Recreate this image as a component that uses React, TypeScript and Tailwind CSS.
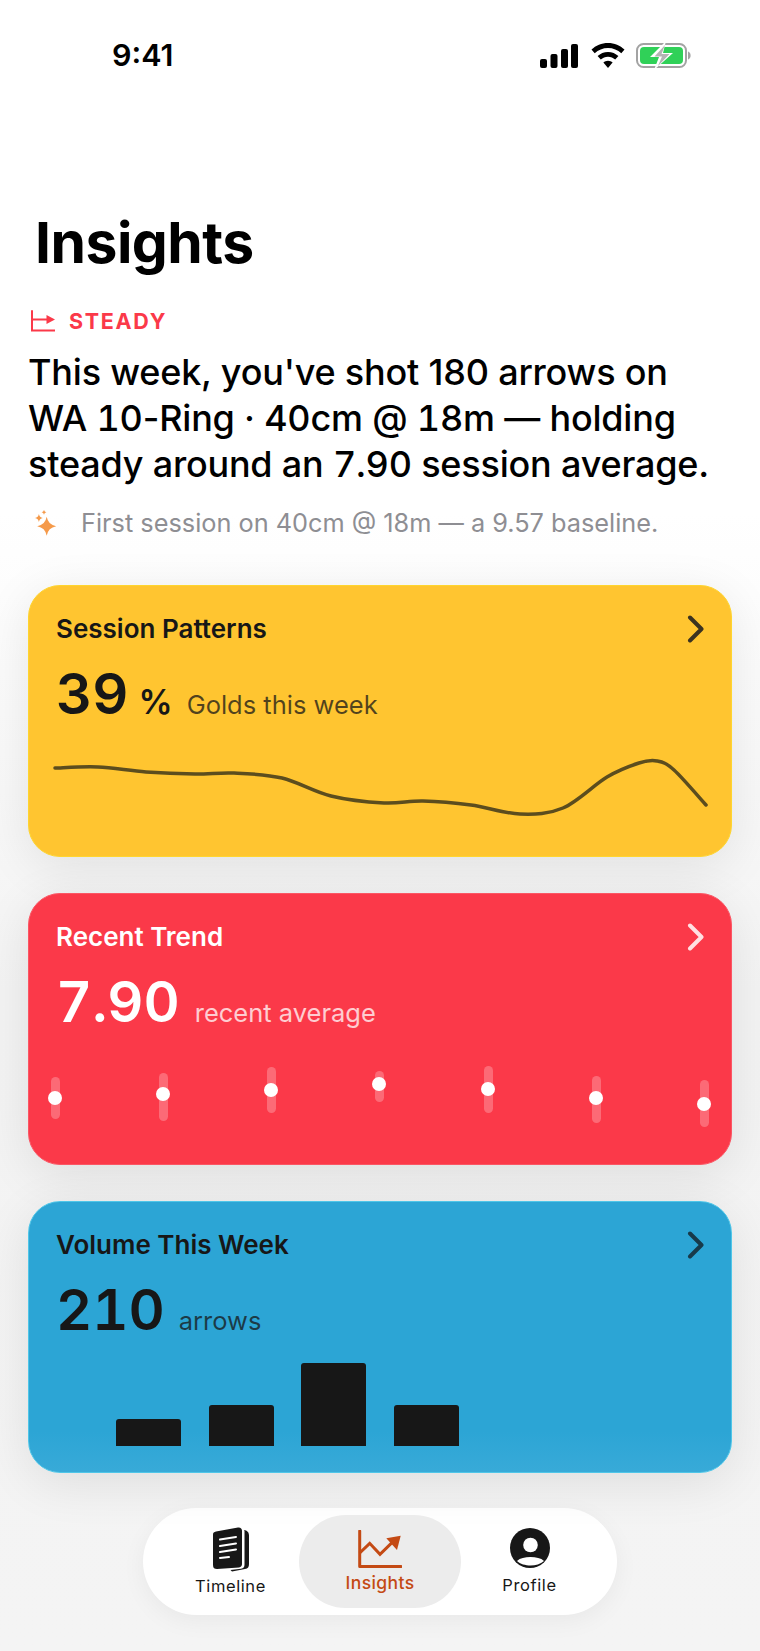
const font = { fontFamily: "Inter, 'Liberation Sans', sans-serif" };

const buildSpline = (points: number[][]) => {
  let d = `M${points[0][0]} ${points[0][1]}`;
  for (let i = 0; i < points.length - 1; i++) {
    const p0 = points[i - 1] || points[i];
    const p1 = points[i];
    const p2 = points[i + 1];
    const p3 = points[i + 2] || p2;
    const c1x = p1[0] + (p2[0] - p0[0]) / 6;
    const c1y = p1[1] + (p2[1] - p0[1]) / 6;
    const c2x = p2[0] - (p3[0] - p1[0]) / 6;
    const c2y = p2[1] - (p3[1] - p1[1]) / 6;
    d += ` C${c1x} ${c1y} ${c2x} ${c2y} ${p2[0]} ${p2[1]}`;
  }
  return d;
};

// sparkline points, measured off the card's left edge and chart top
const sparkline = [
  [26, 18], [69, 17], [117, 22], [166, 24], [205, 23], [253, 28], [302, 46],
  [355, 53], [394, 51], [442, 55], [491, 64], [534, 58], [578, 27], [610, 13],
  [628, 11], [645, 20], [677, 55],
];

const trend = [
  { top: 11, height: 42, dot: 32 },
  { top: 7, height: 48, dot: 28 },
  { top: 1, height: 46, dot: 24 },
  { top: 5, height: 31, dot: 18 },
  { top: 0, height: 47, dot: 23 },
  { top: 10, height: 47, dot: 32 },
  { top: 14, height: 47, dot: 38 },
];

const star = (cx: number, cy: number, r: number) =>
  `M${cx} ${cy - r} Q${cx + r * 0.15} ${cy - r * 0.15} ${cx + r} ${cy} Q${cx + r * 0.15} ${cy + r * 0.15} ${cx} ${cy + r} Q${cx - r * 0.15} ${cy + r * 0.15} ${cx - r} ${cy} Q${cx - r * 0.15} ${cy - r * 0.15} ${cx} ${cy - r} Z`;

const Chevron = ({ className }: { className: string }) => (
  <svg width="18" height="28" viewBox="0 0 18 28" fill="none" className={className}>
    <path d="M3 2.500 L14.500 14 L3 25.500" stroke="currentColor" strokeWidth="4" strokeLinecap="round" strokeLinejoin="round" />
  </svg>
);

const StatusBar = () => (
  <div className="flex h-[70px] items-end justify-between pl-[112px] pr-[69px]">
    <span className="mb-[-3px] text-[30.500px] leading-[36px] font-semibold text-black">9:41</span>
    <div className="mb-[2px] flex items-center gap-[13px]">
      <svg width="38" height="24" viewBox="0 0 38 24" fill="#000">
        <rect x="0" y="15" width="7" height="9" rx="2" />
        <rect x="10.500" y="10" width="7" height="14" rx="2" />
        <rect x="21" y="5" width="7" height="19" rx="2" />
        <rect x="31" y="0" width="7" height="24" rx="2" />
      </svg>
      <svg width="34" height="25" viewBox="0 0 34 25" fill="#000">
        <path d="M17 0C10.600 0 4.800 2.500.500 6.600l3.200 3.600C7.200 6.900 11.900 4.900 17 4.900s9.800 2 13.300 5.300l3.200-3.600C29.200 2.500 23.400 0 17 0z" />
        <path d="M17 9c-4 0-7.700 1.600-10.400 4.100l3.200 3.500c1.900-1.700 4.400-2.800 7.200-2.800s5.300 1.100 7.200 2.800l3.200-3.500C24.700 10.600 21 9 17 9z" />
        <path d="M17 17.800c-1.800 0-3.400.7-4.600 1.700L17 25l4.600-5.500c-1.200-1-2.800-1.700-4.600-1.700z" />
      </svg>
      <svg width="55" height="25" viewBox="0 0 55 25" fill="none" className="-ml-[2px]">
        <rect x="1" y="1" width="49" height="23" rx="6.500" stroke="#a3a3a3" strokeWidth="2" />
        <path d="M52 8.500c1.600.5 2.600 2 2.600 4s-1 3.500-2.600 4z" fill="#a3a3a3" />
        <rect x="4" y="4" width="43" height="17" rx="4" fill="#30d158" />
        <path d="M30 -2 L14 14 H23 L18 27 L37 10 H27 Z" fill="#fff" />
        <path d="M29 2 L18.500 13.500 H26 L22 23 L33.500 11 H25.500 Z" fill="#b4b4b4" />
      </svg>
    </div>
  </div>
);

const Summary = () => (
  <div className="pl-[28px] pr-[20px]">
    <div className="mt-[45px] flex items-center gap-[14px] pl-[3px]">
      <svg width="24" height="22" viewBox="0 0 24 22" fill="none">
        <path d="M1 1 V20.500 H24" stroke="#fb3949" strokeWidth="2" strokeLinecap="round" />
        <path d="M1 9.500 H17" stroke="#fb3949" strokeWidth="2" />
        <path d="M15.500 5 L24 9.500 L15.500 14 Z" fill="#fb3949" />
      </svg>
      <span className="text-[21.500px] leading-[24px] font-bold tracking-[1.7px] text-[#fb3949]">STEADY</span>
    </div>
    <p className="mt-[16px] text-[36px] leading-[46px] font-medium tracking-[-0.2px] text-black">
      This week, you've shot 180 arrows on
      <br />
      WA <span className="tabular-nums">10</span>-Ring · <span className="tabular-nums">40</span>cm @ <span className="tabular-nums">18</span>m — holding
      <br />
      steady around an <span className="tabular-nums">7.90</span> session average.
    </p>
    <div className="mt-[21px] flex items-center gap-[24px] pl-[7px]">
      <svg width="22" height="26" viewBox="0 0 22 26" fill="#f59a4a">
        <path d={star(11.700, 16.300, 9.500)} />
        <path d={star(3.900, 8, 3.900)} />
        <path d={star(9, 2.300, 2.400)} />
      </svg>
      <span className="text-[25.300px] leading-[30px] text-[#8e8e93]">First session on 40cm @ 18m — a 9.57 baseline.</span>
    </div>
  </div>
);

const cardShell = "flex h-[272px] flex-col rounded-[32px] border shadow-[0_10px_50px_rgba(0,0,0,0.09)]";

const CardHeader = ({ title, chevron, titleClass }: { title: string; chevron: string; titleClass: string }) => (
  <div className="flex items-center justify-between pt-[28px] pr-[26px] pl-[27px]">
    <span className={`text-[26px] leading-[30px] font-semibold ${titleClass}`}>{title}</span>
    <Chevron className={chevron} />
  </div>
);

const SessionPatterns = () => (
  <div className={`${cardShell} border-[#ffd52e] bg-[#ffc530]`}>
    <CardHeader title="Session Patterns" chevron="text-[#3b3320]" titleClass="text-[#171717]" />
    <div className="mt-[18px] flex items-baseline pl-[27px]">
      <span className="text-[56px] leading-[64px] font-semibold text-[#171717] tabular-nums">39</span>
      <span className="ml-[10px] text-[34px] leading-[40px] font-semibold text-[#171717]">%</span>
      <span className="ml-[14px] text-[25.500px] text-[#171717]/75">Golds this week</span>
    </div>
    <svg width="703" height="70" viewBox="0 0 703 70" fill="none" className="mt-[24px]">
      <path d={buildSpline(sparkline)} stroke="#5c4d1e" strokeWidth="3.500" strokeLinecap="round" />
    </svg>
  </div>
);

const RecentTrend = () => (
  <div className={`${cardShell} border-[#fb5664] bg-[#fb3949]`}>
    <CardHeader title="Recent Trend" chevron="text-[#ffe0e2]" titleClass="text-white" />
    <div className="mt-[18px] flex items-baseline pl-[27px]">
      <span className="text-[56px] leading-[64px] font-semibold text-white tabular-nums">7.90</span>
      <span className="ml-[15px] text-[25.500px] text-white/75">recent average</span>
    </div>
    <div className="mt-[32px] flex justify-between pr-[22px] pl-[22px]">
      {trend.map((t, i) => (
        <div key={i} className="relative h-[62px] w-[9px]">
          <div className="w-[9px] rounded-full bg-white/25" style={{ marginTop: t.top, height: t.height }} />
          <div className="absolute -left-[3px] h-[14px] w-[14px] rounded-full bg-white" style={{ top: t.dot - 7 }} />
        </div>
      ))}
    </div>
  </div>
);

const bars = [27, 41, 83, 41];

const VolumeThisWeek = () => (
  <div className={`${cardShell} border-[#4fc6e8] bg-[linear-gradient(#2ca5d5_85%,#38aad8)]`}>
    <CardHeader title="Volume This Week" chevron="text-[#183a4a]" titleClass="text-[#171717]" />
    <div className="mt-[18px] flex items-baseline pl-[27px]">
      <span className="text-[56px] leading-[64px] font-semibold text-[#171717] tabular-nums">210</span>
      <span className="ml-[14px] text-[25.500px] text-[#171717]/75">arrows</span>
    </div>
    <div className="mt-[20px] flex h-[84px] items-end gap-[27.500px] pl-[87px]">
      {bars.map((h, i) => (
        <div key={i} className="w-[65px] rounded-t-[3px] bg-[#171717]" style={{ height: h }} />
      ))}
    </div>
  </div>
);

const TabBar = () => (
  <div className="mx-auto mt-[35px] flex h-[107px] w-[474px] items-center rounded-[54px] bg-white pl-[7px] shadow-[0_6px_24px_rgba(0,0,0,0.05)]">
    <div className="flex w-[149px] flex-col items-center pl-[12px]">
      <svg width="36" height="45" viewBox="0 0 36 45" fill="none">
        <path d="M31 3 C34 3.500 36 5 36 8.500 V37 C36 40 35 41.500 32 42 L19 44.500 L17.500 43 L28 41.800 C30.500 41.500 31.500 40 31.500 37.500 V4 Z" fill="#171717" />
        <path d="M3 4.500 L25 .500 C27.500 .200 29 1.500 29 4 V37 C29 39 28 40 26 40.500 L4 42 C1.500 42 0 41 0 38 V7.500 C0 5.500 1 5 3 4.500 Z" fill="#171717" />
        <path d="M7 12.500 L23 10 M7 19 L23 16.500 M7 25 L23 22.500 M7 31 L16 30" stroke="#fff" strokeWidth="2" strokeLinecap="round" />
      </svg>
      <span className="mt-[3px] text-[16.500px] leading-[22px] font-normal tracking-[0.6px] text-[#171717]">Timeline</span>
    </div>
    <div className="flex h-[93px] w-[162px] flex-col items-center justify-center rounded-[47px] bg-[#ececec]">
      <svg width="44" height="38" viewBox="0 0 44 38" fill="none">
        <path d="M1.700 1 V36.500 H43" stroke="#c44a14" strokeWidth="3" strokeLinecap="round" strokeLinejoin="round" />
        <path d="M1.700 23 L11.700 13.300 L22 24.300 L35 11.700" stroke="#c44a14" strokeWidth="3" />
        <path d="M28.300 8.300 L42.700 5.700 L39 20 Z" fill="#c44a14" />
      </svg>
      <span className="mt-[4px] text-[17.500px] leading-[22px] font-medium tracking-[0.4px] text-[#c44a14]">Insights</span>
    </div>
    <div className="flex w-[137px] flex-col items-center">
      <svg width="40" height="40" viewBox="0 0 40 40">
        <circle cx="20" cy="20" r="20" fill="#171717" />
        <circle cx="20.500" cy="17" r="7.300" fill="#fff" />
        <path d="M7 33 C10 30 15 29 20.500 29 S31 30 34 33 C30.500 36 25.500 37.500 20.500 37.500 S10 36 7 33 Z" fill="#fff" />
      </svg>
      <span className="mt-[6px] text-[16.500px] leading-[22px] font-normal tracking-[0.6px] text-[#171717]">Profile</span>
    </div>
  </div>
);

export default function App() {
  return (
    <div className="h-[1651px] overflow-hidden bg-[linear-gradient(#ffffff_31%,#f3f3f3_60%,#f4f4f4)]" style={font}>
      <StatusBar />
      <h1 className="mt-[152px] h-[42px] pl-[35px] text-[57px] leading-[42px] font-bold tracking-[-0.5px] text-black">Insights</h1>
      <Summary />
      <div className="mt-[47px] flex flex-col gap-[36px] px-[28px]">
        <SessionPatterns />
        <RecentTrend />
        <VolumeThisWeek />
      </div>
      <TabBar />
    </div>
  );
}
